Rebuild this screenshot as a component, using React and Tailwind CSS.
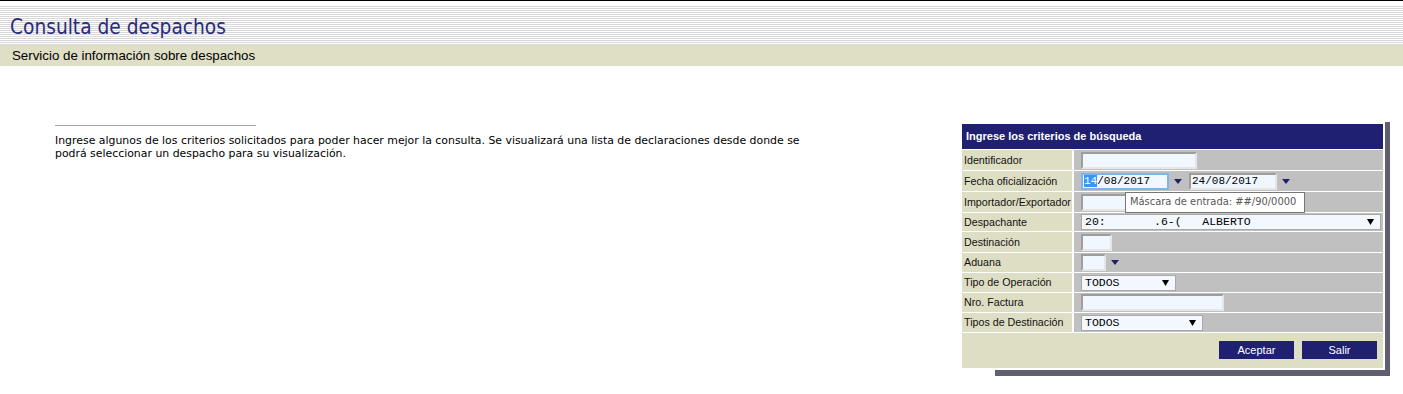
import React from "react";

const tahoma = "font-['DejaVu_Sans_Condensed','DejaVu_Sans',sans-serif]";
const verdana = "font-['DejaVu_Sans',sans-serif]";
const arial = "font-['Liberation_Sans',Arial,sans-serif]";
const mono = "font-['Liberation_Mono','Courier_New',monospace]";

// flechita azul de los calendarios / combos
function NavyArrow() {
  return (
    <svg width="8" height="5" viewBox="0 0 8 5" className="shrink-0">
      <polygon points="0,0 8,0 4,5" fill="#1f2070" />
    </svg>
  );
}

function BlackArrow() {
  return (
    <svg width="7" height="6" viewBox="0 0 7 6" className="shrink-0">
      <polygon points="0,0 7,0 3.5,6" fill="#000" />
    </svg>
  );
}

function Input({ w, children, focused }) {
  return (
    <div
      className={
        "h-[17px] flex items-center bg-[#f0f7ff] border-2 " +
        (focused
          ? "border-[#7eb4ea]"
          : "border-t-[#9d9d9d] border-l-[#9d9d9d] border-r-[#e6e6e6] border-b-[#e6e6e6]")
      }
      style={{ width: w }}
    >
      {children}
    </div>
  );
}

function Select({ w, text }) {
  return (
    <div
      className={"h-[16px] flex items-center justify-between bg-[#f3f8ff] border border-[#a9a9a9] pl-[3px] pr-[6px] " + mono + " text-[11.5px] text-black"}
      style={{ width: w }}
    >
      <span className="whitespace-pre leading-none">{text}</span>
      <BlackArrow />
    </div>
  );
}

function Row({ label, h, children }) {
  return (
    <>
      <div
        className={"bg-[#dedec5] flex items-center pl-[2px] text-[10.7px] text-[#111] " + arial}
        style={{ height: h }}
      >
        {label}
      </div>
      <div className="bg-[#c0c0c0] flex items-center gap-[5px] pl-[7px]" style={{ height: h }}>
        {children}
      </div>
    </>
  );
}

export default function App() {
  return (
    <div className="w-[1403px] h-[394px] bg-white overflow-hidden">
      {/* cabecera */}
      <div className="border-t border-black pt-[5px]">
        <div className="h-[39px] bg-[repeating-linear-gradient(to_bottom,#d8d8d8_0px,#d8d8d8_1px,#ffffff_1px,#ffffff_2px)] flex items-end pb-[7px] pl-[10px]">
          <h1 className={"text-[20.7px] leading-none text-[#2a2b7c] " + tahoma}>Consulta de despachos</h1>
        </div>
        <div className="h-[21px] bg-[#dfdfc6] flex items-center pl-[12px]">
          <span className={"text-[13.3px] text-black " + arial}>Servicio de información sobre despachos</span>
        </div>
      </div>

      <div className="flex justify-between">
        {/* texto de ayuda */}
        <div className="ml-[55px] mt-[59px] w-[780px]">
          <div className="w-[201px] border-t border-[#a8a8a8]" />
          <p className={"mt-[8px] text-[10.9px] leading-[13px] text-black whitespace-nowrap " + verdana}>
            Ingrese algunos de los criterios solicitados para poder hacer mejor la consulta. Se visualizará una lista de declaraciones desde donde se
            <br />
            podrá seleccionar un despacho para su visualización.
          </p>
        </div>

        {/* panel de criterios */}
        <div className="relative mt-[56px] mr-[18px] w-[425px] h-[248px]">
          <div className="absolute left-[35px] top-0 -right-[5px] -bottom-[6px] bg-[#605f70]" />
          <div className="relative bg-white p-[2px] w-full h-full">
            <div className={"h-[25px] bg-[#1f2070] flex items-center pl-[4px] text-white font-bold text-[11px] " + arial}>
              Ingrese los criterios de búsqueda
            </div>
            <div className="grid grid-cols-[110px_1fr] gap-x-[2px] gap-y-[1px] mt-[1px]">
              <Row label="Identificador" h={20}>
                <Input w={116} />
              </Row>
              <Row label="Fecha oficialización" h={20}>
                <Input w={88} focused>
                  <span className={"pl-[1px] text-[11px] leading-none whitespace-pre " + mono}>
                    <span className="bg-[#3399ff] text-white">14</span>
                    /08/2017
                  </span>
                </Input>
                <NavyArrow />
                <div className="ml-[2px]">
                  <Input w={88}>
                    <span className={"pl-[1px] text-[11px] leading-none " + mono}>24/08/2017</span>
                  </Input>
                </div>
                <NavyArrow />
              </Row>
              <Row label="Importador/Exportador" h={20}>
                <Input w={95} />
              </Row>
              <Row label="Despachante" h={18}>
                <Select w={300} text={"20:       .6-(   ALBERTO"} />
              </Row>
              <Row label="Destinación" h={20}>
                <Input w={31} />
              </Row>
              <Row label="Aduana" h={19}>
                <Input w={25} />
                <NavyArrow />
              </Row>
              <Row label="Tipo de Operación" h={19}>
                <Select w={95} text="TODOS" />
              </Row>
              <Row label="Nro. Factura" h={19}>
                <Input w={143} />
              </Row>
              <Row label="Tipos de Destinación" h={19}>
                <Select w={122} text="TODOS" />
              </Row>
            </div>
            <div className="mt-[1px] h-[35px] bg-[#dedec5] flex justify-end items-start gap-[8px] pt-[8px] pr-[6px]">
              <button className={"w-[75px] h-[18px] bg-[#1f2070] text-white text-[11px] " + arial}>Aceptar</button>
              <button className={"w-[75px] h-[18px] bg-[#1f2070] text-white text-[11px] " + arial}>Salir</button>
            </div>

            {/* tooltip de la máscara */}
            <div className={"absolute left-[165px] top-[70px] w-[180px] h-[21px] bg-white border border-[#767676] flex items-center pl-[4px] whitespace-nowrap text-[11px] text-[#575757] " + tahoma}>
              Máscara de entrada: ##/90/0000
            </div>
          </div>
        </div>
      </div>
    </div>
  );
}
